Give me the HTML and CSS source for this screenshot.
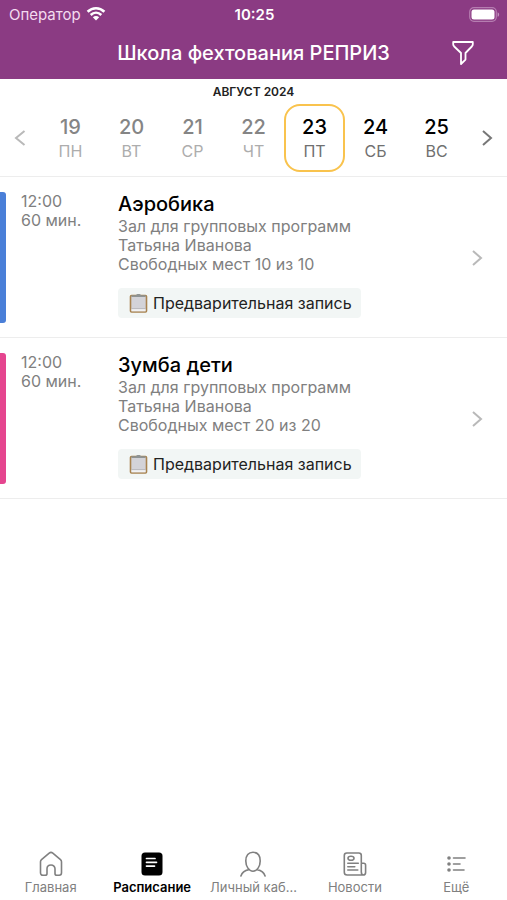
FILE: index.html
```html
<!DOCTYPE html>
<html lang="ru">
<head>
<meta charset="utf-8">
<meta name="viewport" content="width=device-width, initial-scale=1">
<title>Школа фехтования РЕПРИЗ</title>
<link rel="stylesheet" href="styles.css">
</head>
<body>
<header class="header">
  <div class="status">
    <div class="carrier">
      <span>Оператор</span>
      <svg width="20" height="16" viewBox="0 0 20 16" fill="none" stroke="#fff" stroke-width="2.6"><path d="M1.600 5.800C6.500 1 13.500 1 18.400 5.800M4.700 9C7.800 6 12.200 6 15.300 9"/><path d="M6.800 11.300c1.900-1.700 4.500-1.700 6.400 0L10 14.600z" fill="#fff" stroke="none"/></svg>
    </div>
    <time class="clock">10:25</time>
    <svg class="battery" width="31" height="15" viewBox="0 0 31 15"><rect x=".7" y=".7" width="26.600" height="13.600" rx="4.200" fill="none" stroke="#b57db0" stroke-width="1.200"/><rect x="2.500" y="2.500" width="23" height="10" rx="2.500" fill="#fff"/><path d="M28.600 5.200c2 .8 2 3.800 0 4.600z" fill="#c193bd"/></svg>
  </div>
  <div class="titlebar">
    <h1 class="title">Школа фехтования РЕПРИЗ</h1>
    <button class="filter" type="button" aria-label="Фильтр"><svg width="22" height="26" viewBox="0 0 22 26" fill="none" stroke="#fff" stroke-width="1.800" stroke-linejoin="round"><path d="M1.200 2h19.600v2.200c0 1-.4 1.600-1 2.300L13.500 13v6.600L9 24V13L2.200 6.500c-.6-.7-1-1.300-1-2.300z"/></svg></button>
  </div>
</header>
<main class="content">
  <section class="calendar">
    <h2 class="month">АВГУСТ 2024</h2>
    <div class="week">
      <button class="arrow prev" type="button" aria-label="Предыдущая неделя"><svg width="12" height="18" viewBox="0 0 12 18"><path d="M10.500 2 2 9l8.500 7"/></svg></button>
      <button class="day past" type="button"><b>19</b><span>ПН</span></button>
      <button class="day past" type="button"><b>20</b><span>ВТ</span></button>
      <button class="day past" type="button"><b>21</b><span>СР</span></button>
      <button class="day past" type="button"><b>22</b><span>ЧТ</span></button>
      <button class="day selected" type="button"><b>23</b><span>ПТ</span></button>
      <button class="day" type="button"><b>24</b><span>СБ</span></button>
      <button class="day" type="button"><b>25</b><span>ВС</span></button>
      <button class="arrow next" type="button" aria-label="Следующая неделя"><svg width="12" height="18" viewBox="0 0 12 18"><path d="m2 2 8 7-8 7"/></svg></button>
    </div>
  </section>
  <article class="lesson blue">
    <div class="when"><time>12:00</time><span>60 мин.</span></div>
    <div class="info">
      <h3 class="name">Аэробика</h3>
      <p>Зал для групповых программ</p>
      <p>Татьяна Иванова</p>
      <p>Свободных мест 10 из 10</p>
      <div class="tag"><svg width="19" height="20" viewBox="0 0 19 20"><rect x="1.500" y="2.500" width="16" height="16.500" rx="1" fill="#d3d3d8" stroke="#a8834f" stroke-width="1.600"/><path d="M2.500 15.800h14v2.500h-14z" fill="#f1f1f2"/><path d="M2.500 15.600h14" stroke="#aaaaae" stroke-width=".7"/><path d="M2.500 3.900V2.300H7C7.300.4 11.700.4 12 2.300h4.500v1.600z" fill="#8f9494"/></svg><span>Предварительная запись</span></div>
    </div>
    <a class="open" href="#aerobika" aria-label="Аэробика"><svg width="12" height="18" viewBox="0 0 12 18"><path d="m2 2 8 7-8 7"/></svg></a>
  </article>
  <article class="lesson pink">
    <div class="when"><time>12:00</time><span>60 мин.</span></div>
    <div class="info">
      <h3 class="name">Зумба дети</h3>
      <p>Зал для групповых программ</p>
      <p>Татьяна Иванова</p>
      <p>Свободных мест 20 из 20</p>
      <div class="tag"><svg width="19" height="20" viewBox="0 0 19 20"><rect x="1.500" y="2.500" width="16" height="16.500" rx="1" fill="#d3d3d8" stroke="#a8834f" stroke-width="1.600"/><path d="M2.500 15.800h14v2.500h-14z" fill="#f1f1f2"/><path d="M2.500 15.600h14" stroke="#aaaaae" stroke-width=".7"/><path d="M2.500 3.900V2.300H7C7.300.4 11.700.4 12 2.300h4.500v1.600z" fill="#8f9494"/></svg><span>Предварительная запись</span></div>
    </div>
    <a class="open" href="#zumba" aria-label="Зумба дети"><svg width="12" height="18" viewBox="0 0 12 18"><path d="m2 2 8 7-8 7"/></svg></a>
  </article>
</main>
<nav class="tabs">
  <a class="tab" href="#home"><svg viewBox="0 0 26 26"><path d="M2.500 10.800c0-.8.300-1.500 1-2.100l7.700-6.600c1.100-.9 2.500-.9 3.600 0l7.700 6.600c.7.600 1 1.300 1 2.100v11c0 1.500-1 2.400-2.300 2.400h-2.400c-1.200 0-1.800-.7-1.800-1.800v-4.600c0-2.200-1.600-3.800-4-3.800s-4 1.600-4 3.800v4.600c0 1.100-.6 1.800-1.800 1.800H4.800c-1.300 0-2.300-.9-2.300-2.400z"/></svg><span>Главная</span></a>
  <a class="tab active" href="#schedule" aria-current="page"><svg viewBox="0 0 26 26"><rect x="2.500" y="1.500" width="21" height="23" rx="3.500" fill="#000" stroke="none"/><path d="M7.500 7.500H16M7.500 11.300h10M7.500 15.100h8" stroke="#fff" stroke-width="1.700"/></svg><span>Расписание</span></a>
  <a class="tab" href="#profile"><svg viewBox="0 0 26 26"><path d="M13 1.300c4.500 0 7.200 3.200 7.200 8.700S17 20.200 13 20.200 5.800 15.500 5.800 10 8.500 1.300 13 1.300zM8.800 18.600C4.700 19.400 2 21.300.9 25M17.200 18.600c4.100.8 6.800 2.700 7.900 6.400"/></svg><span>Личный каб...</span></a>
  <a class="tab" href="#news"><svg viewBox="0 0 26 26"><path d="M19.300 11.500v-7c0-1.600-.9-2.500-2.500-2.500h-12C3.200 2 2.300 2.900 2.300 4.500v16.700c0 1.800 1 2.800 2.800 2.800h16c1.600 0 2.500-1 2.500-2.600v-7.200c0-1.200-.7-1.900-1.900-1.900h-2.400v8.500c0 2.100.6 3.200 2 3.200M5.800 12.300h10.500M5.800 15.700h7M5.800 19h10"/><ellipse cx="9" cy="7.200" rx="3" ry="2"/></svg><span>Новости</span></a>
  <a class="tab" href="#more"><svg viewBox="0 0 26 26"><path d="M10.500 7h11.500M10.500 13h6.500M10.500 19H21"/><g fill="#808080" stroke="none"><circle cx="6" cy="7" r="1.800"/><circle cx="6" cy="13" r="1.800"/><circle cx="6" cy="19" r="1.800"/></g></svg><span>Ещё</span></a>
</nav>
</body>
</html>
```
FILE: styles.css
```css
* { box-sizing: border-box; }
body {
  margin: 0;
  min-height: 100vh;
  display: flex;
  flex-direction: column;
  background: #fff;
  color: #000;
  font-family: Inter, "Liberation Sans", sans-serif;
}
h1, h2, h3, p { margin: 0; font-weight: 400; }
button { border: 0; padding: 0; background: none; font: inherit; color: inherit; }
a { color: inherit; text-decoration: none; }
svg { display: block; }

.header { background: #8b3b83; color: #fff; padding-bottom: 1px; }
.status {
  display: grid;
  grid-template-columns: 1fr auto 1fr;
  align-items: center;
  height: 28px;
  padding: 0 7px 0 9px;
  font-size: 15px;
}
.carrier { display: flex; align-items: center; gap: 5px; color: #f3dcf0; }
.clock { font-weight: 600; }
.battery { justify-self: end; }
.titlebar {
  display: grid;
  grid-template-columns: 88px 1fr 88px;
  align-items: center;
  height: 50px;
}
.title { grid-column: 2; text-align: center; font-size: 20px; font-weight: 500; white-space: nowrap; }
.filter { justify-self: center; }

.content { flex: 1; }
.calendar { border-bottom: 1px solid #ededed; padding-bottom: 4px; }
.month { padding-top: 5px; text-align: center; font-size: 12px; line-height: 16px; font-weight: 600; color: #222; }
.week { display: grid; grid-template-columns: 40px repeat(7, 1fr) 40px; padding-top: 4px; }
.day {
  display: flex;
  flex-direction: column;
  align-items: center;
  height: 68px;
  padding-top: 9px;
  border: 2px solid transparent;
  border-radius: 16px;
}
.day b { font-size: 20px; line-height: 24px; font-weight: 500; }
.day span { font-size: 16px; line-height: 24px; color: #707070; }
.day.past b { color: #858585; }
.day.past span { color: #adadad; }
.day.selected { border-color: #f9c34d; }
.arrow { display: grid; place-items: center; }
.arrow svg, .open svg { fill: none; stroke-width: 2; }
.prev { stroke: #b9b9b9; }
.next { stroke: #777; }

.lesson {
  display: grid;
  grid-template-columns: 6px 98px 1fr 60px;
  padding: 15px 0 14px;
  border-bottom: 1px solid #ededed;
}
.lesson::before { content: ""; border-radius: 0 3px 3px 0; background: #4a7fd8; }
.pink::before { background: #e5458f; }
.when { display: flex; flex-direction: column; padding-left: 15px; }
.when, .info p { font-size: 16px; line-height: 19px; color: #808080; }
.info { padding: 0 0 5px 14px; }
.name { font-size: 20px; line-height: 25px; font-weight: 500; }
.tag {
  display: inline-flex;
  align-items: center;
  gap: 5px;
  height: 30px;
  margin-top: 14px;
  padding: 0 9px 0 11px;
  border-radius: 4px;
  background: #f2f6f5;
  color: #222;
  font-size: 16px;
}
.open { display: grid; place-items: center; stroke: #b9b9b9; }

.tabs { display: grid; grid-template-columns: repeat(5, 1fr); padding-bottom: 5px; }
.tab {
  display: flex;
  flex-direction: column;
  align-items: center;
  gap: 2px;
  font-size: 13px;
  line-height: 16px;
  color: #808080;
}
.tab svg { width: 26px; height: 26px; fill: none; stroke: #808080; stroke-width: 1.6; stroke-linecap: round; stroke-linejoin: round; }
.tab.active { color: #000; font-weight: 600; }
```
